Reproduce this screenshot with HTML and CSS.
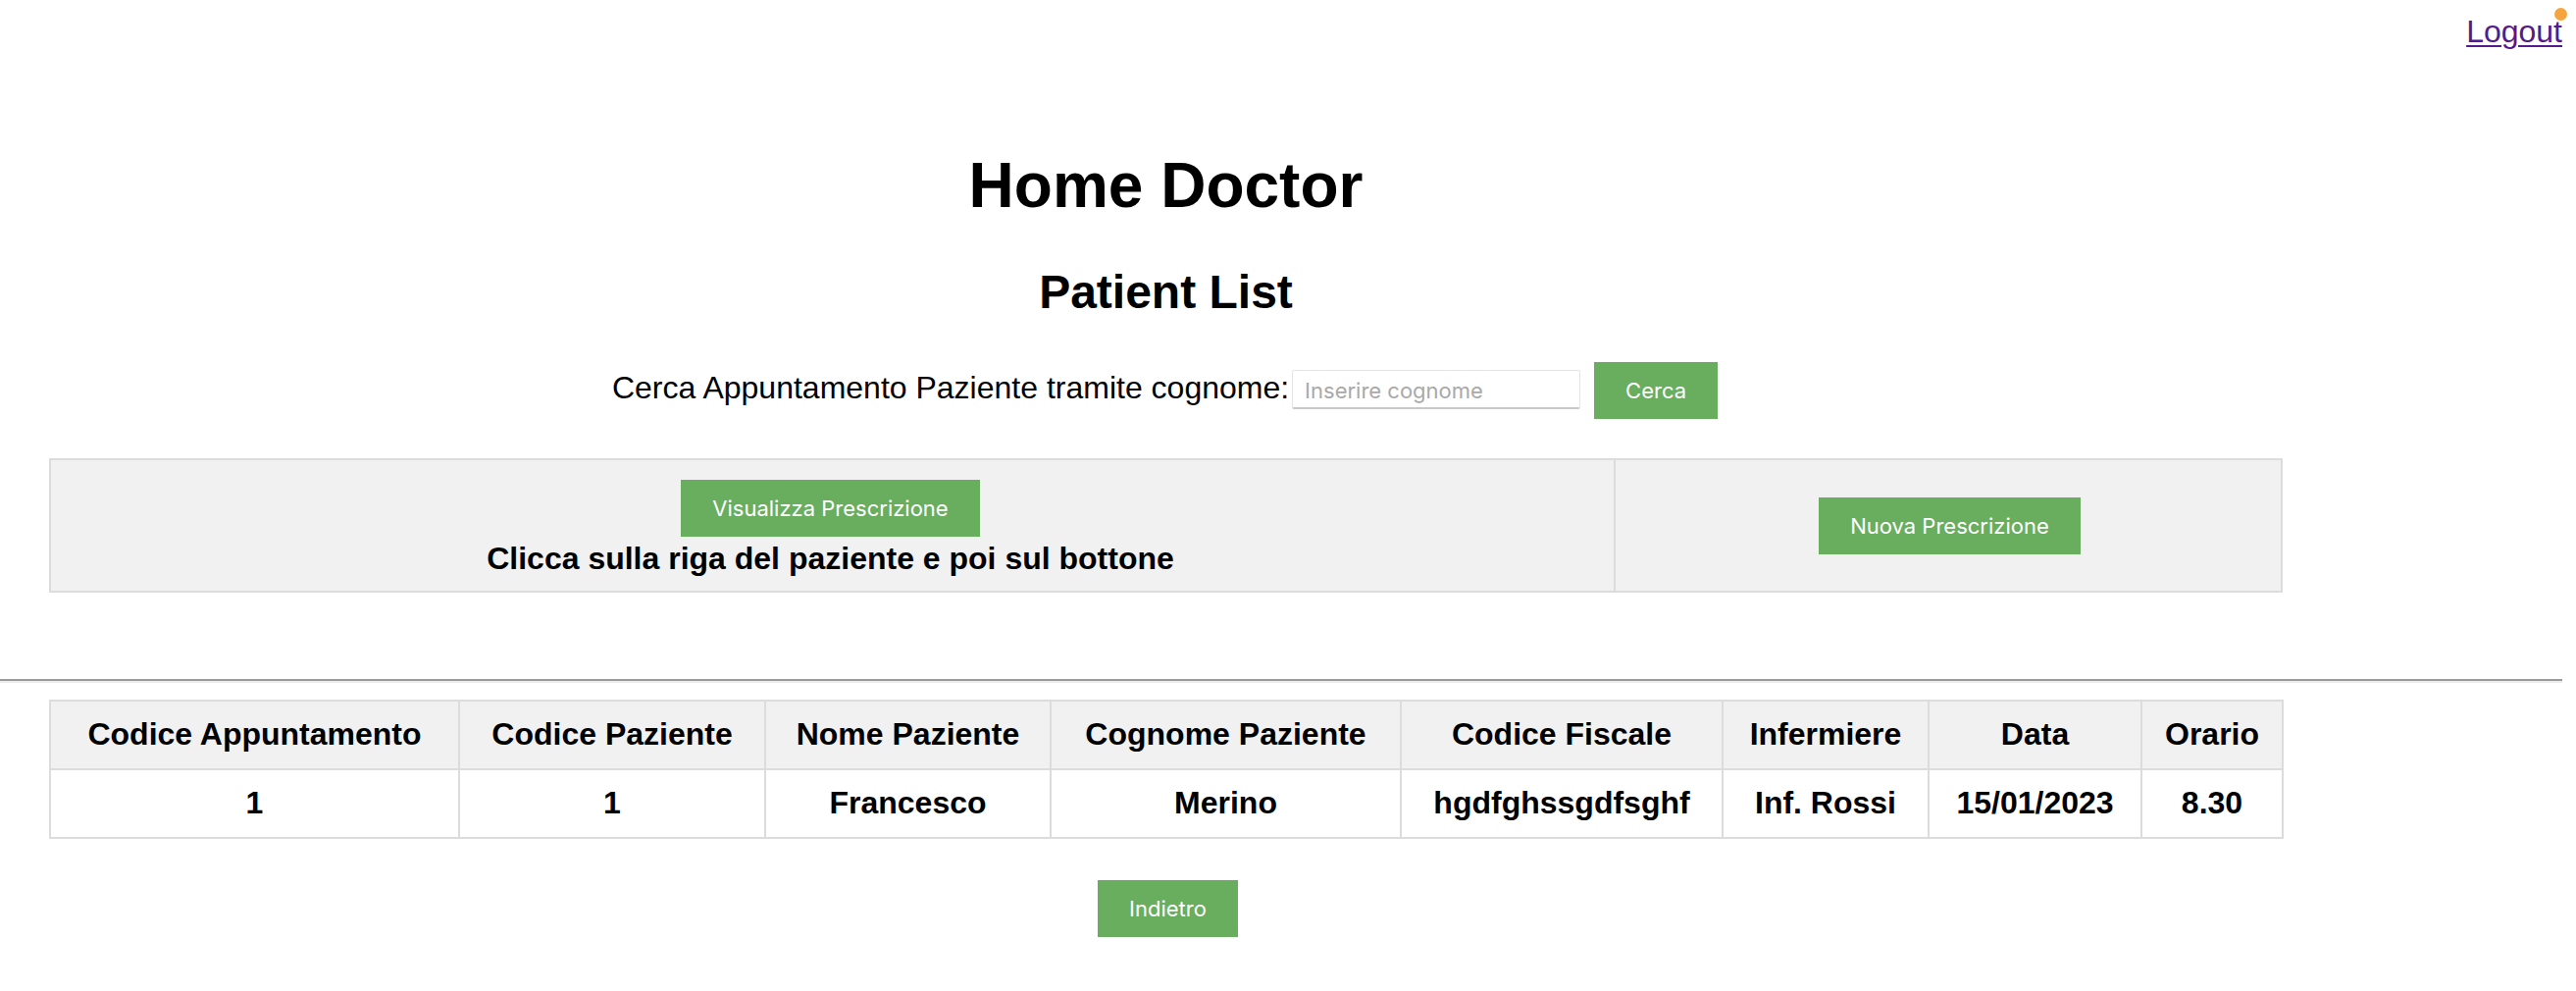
FILE: index.html
```html
<!DOCTYPE html>
<html lang="it">
<head>
<meta charset="utf-8">
<title>Home Doctor</title>
<link rel="stylesheet" href="styles.css">
</head>
<body>
<div class="topbar">
  <a class="logout" href="#">Logout<span class="badge"></span></a>
</div>
<div class="container">
  <h1 class="title">Home Doctor</h1>
  <h2 class="subtitle">Patient List</h2>
  <form class="search">
    <label class="search-label" for="cognome">Cerca Appuntamento Paziente tramite cognome:</label>
    <input class="search-input" id="cognome" type="text" placeholder="Inserire cognome">
    <button class="btn btn-cerca" type="button">Cerca</button>
  </form>
  <div class="panel">
    <div class="panel-left">
      <button class="btn" type="button">Visualizza Prescrizione</button>
      <div class="hint">Clicca sulla riga del paziente e poi sul bottone</div>
    </div>
    <div class="panel-right">
      <button class="btn" type="button">Nuova Prescrizione</button>
    </div>
  </div>
</div>
<hr class="divider">
<div class="container">
  <table class="patients">
    <colgroup>
      <col class="c1"><col class="c2"><col class="c3"><col class="c4"><col class="c5"><col class="c6"><col class="c7"><col class="c8">
    </colgroup>
    <thead>
      <tr>
        <th>Codice Appuntamento</th>
        <th>Codice Paziente</th>
        <th>Nome Paziente</th>
        <th>Cognome Paziente</th>
        <th>Codice Fiscale</th>
        <th>Infermiere</th>
        <th>Data</th>
        <th>Orario</th>
      </tr>
    </thead>
    <tbody>
      <tr>
        <td>1</td>
        <td>1</td>
        <td>Francesco</td>
        <td>Merino</td>
        <td>hgdfghssgdfsghf</td>
        <td>Inf. Rossi</td>
        <td>15/01/2023</td>
        <td>8.30</td>
      </tr>
    </tbody>
  </table>
  <div class="back">
    <button class="btn" type="button">Indietro</button>
  </div>
</div>
</body>
</html>
```
FILE: styles.css
```css
html, body {
  margin: 0;
  padding: 0;
  background: #fff;
}
body {
  font-family: "Liberation Sans", Arial, sans-serif;
  font-size: 32px;
  color: #000;
}
.topbar {
  height: 152px;
  box-sizing: border-box;
  padding: 14px 14px 0 0;
  text-align: right;
  line-height: 37px;
}
.logout {
  position: relative;
  color: #551a8b;
  text-decoration: underline;
  text-decoration-thickness: 2px;
  text-underline-offset: 3px;
}
.badge {
  position: absolute;
  right: -5px;
  top: -6px;
  width: 13px;
  height: 13px;
  border-radius: 50%;
  background: #f5a53f;
}
.container {
  margin-left: 50px;
  width: 2277px;
  text-align: center;
}
.title {
  margin: 0;
  font-size: 64px;
  line-height: 74px;
  font-weight: bold;
}
.subtitle {
  margin: 44px 0 0;
  font-size: 48px;
  line-height: 55px;
  font-weight: bold;
}
.search {
  margin: 44px 0 0;
  display: flex;
  justify-content: center;
  align-items: baseline;
  padding-right: 2px;
}
.search-label {
  font-size: 32px;
  line-height: 37px;
  margin-right: 3px;
}
.search-input {
  box-sizing: border-box;
  width: 294px;
  height: 40px;
  padding: 4px 12px 0;
  border: 1px solid #e4e4e4;
  border-bottom: 2px solid #c9c9c9;
  border-radius: 2px;
  font-family: Inter, "Noto Sans", sans-serif;
  font-size: 22px;
  color: #333;
  background: #fff;
  outline: none;
}
.search-input::placeholder {
  color: #a9a9a9;
}
.btn {
  display: inline-block;
  border: none;
  margin: 0;
  background: #69ad5f;
  color: #fff;
  font-family: Inter, "Noto Sans", sans-serif;
  font-size: 22px;
  line-height: 26px;
  padding: 16px 32px;
  cursor: pointer;
}
.btn-cerca {
  margin-left: 14px;
}
.panel {
  margin-top: 40px;
  height: 137px;
  box-sizing: border-box;
  display: grid;
  grid-template-columns: 1595px 1fr;
  border: 2px solid #dcdcdc;
  background: #f1f1f1;
}
.panel-left {
  box-sizing: border-box;
  border-right: 2px solid #dcdcdc;
  padding-top: 20px;
  padding-right: 4px;
  display: flex;
  flex-direction: column;
  align-items: center;
}
.hint {
  margin-top: 4px;
  font-weight: bold;
  line-height: 37px;
}
.panel-right {
  display: flex;
  align-items: center;
  justify-content: center;
  padding-left: 3px;
}
.divider {
  margin: 88px 14px 0 0;
  height: 0;
  border: none;
  border-top: 2px solid #9a9a9a;
  border-bottom: 2px solid #ececec;
}
.patients {
  margin-top: 17px;
  width: 2276px;
  table-layout: fixed;
  border-collapse: collapse;
  font-weight: bold;
  line-height: 37px;
}
.c1 { width: 417px; }
.c2 { width: 312px; }
.c3 { width: 291px; }
.c4 { width: 357px; }
.c5 { width: 328px; }
.c6 { width: 210px; }
.c7 { width: 217px; }
.c8 { width: 144px; }
.patients th,
.patients td {
  border: 2px solid #dcdcdc;
  padding: 15px 8px 16px;
  text-align: center;
  white-space: nowrap;
  font-size: 32px;
  font-weight: bold;
}
.patients thead tr {
  background: #f1f1f1;
}
.patients tbody tr {
  background: #fff;
}
.back {
  margin-top: 42px;
  text-align: center;
  padding-left: 4px;
}
```
